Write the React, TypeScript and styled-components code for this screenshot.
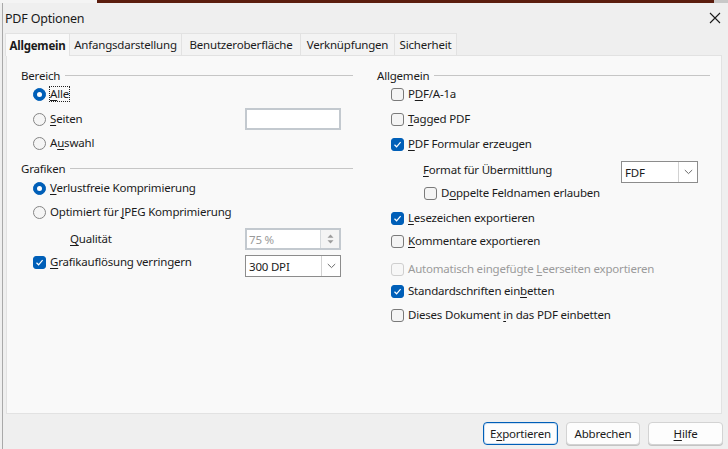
import styled, { createGlobalStyle } from "styled-components";

const Global = createGlobalStyle`
  html, body { margin: 0; padding: 0; }
  body {
    font-family: "Noto Sans", "Liberation Sans", sans-serif;
    font-size: 11.5px;
    letter-spacing: -0.2px;
    color: #1b1b1b;
    background: #efefef;
  }
`;

const Screen = styled.div`
  width: 728px;
  height: 449px;
  display: flex;
  flex-direction: column;
  overflow: hidden;
  background: #efefef;
`;

const TopStrip = styled.div`
  height: 3px;
  flex: none;
  background: linear-gradient(to right, #f4f4f4 0 97px, #5b1d0e 97px 714px, #c8c8c8 714px);
`;

const Body = styled.div`
  flex: 1;
  display: flex;
  flex-direction: column;
  margin-left: 2px;
  border-left: 1px solid #a9a9a9;
`;

const TitleBar = styled.div`
  height: 30px;
  display: flex;
  align-items: center;
  justify-content: space-between;
  padding: 0 7px 0 2px;
  font-size: 12.5px;
  color: #1a1a1a;
`;

const CloseIcon = () => (
  <svg width="12" height="12" viewBox="0 0 12 12">
    <path d="M1 1 L11 11 M11 1 L1 11" stroke="#1a1a1a" strokeWidth="1.1" fill="none" />
  </svg>
);

const TabBar = styled.div`
  height: 22px;
  display: flex;
  padding-left: 2px;
`;

const Tab = styled.div<{ $w: number; $active?: boolean }>`
  width: ${(p) => p.$w}px;
  display: flex;
  align-items: center;
  justify-content: center;
  box-sizing: border-box;
  font-weight: ${(p) => (p.$active ? 700 : 400)};
  background: ${(p) => (p.$active ? "#f9f9f9" : "#f3f3f3")};
  border: 1px solid #e2e2e2;
  border-bottom: none;
  border-left: ${(p) => (p.$active ? "1px solid #e2e2e2" : "none")};
  margin-bottom: ${(p) => (p.$active ? "-1px" : "0")};
  position: relative;
  z-index: ${(p) => (p.$active ? 1 : 0)};
`;

const Panel = styled.div`
  height: 359px;
  margin: 0 6px 0 3px;
  box-sizing: border-box;
  background: #f9f9f9;
  border: 1px solid #e2e2e2;
  display: grid;
  grid-template-columns: 332px 333px;
  column-gap: 24px;
  padding: 11px 0 0 14px;
  align-items: start;
`;

const Column = styled.div`
  display: flex;
  flex-direction: column;
`;

const SectionHead = styled.div<{ $mt?: number }>`
  height: 16px;
  margin-top: ${(p) => p.$mt ?? 0}px;
  display: flex;
  align-items: center;
  gap: 5px;
`;

const Rule = styled.div`
  flex: 1;
  height: 1px;
  background: #c6c6c6;
`;

const Row = styled.div<{ $mt?: number; $h?: number; $indent?: number; $top?: boolean }>`
  display: flex;
  align-items: ${(p) => (p.$top ? "flex-start" : "center")};
  height: ${(p) => p.$h ?? 22}px;
  margin-top: ${(p) => p.$mt ?? 0}px;
  padding-left: ${(p) => p.$indent ?? 0}px;
`;

const Option = styled.div<{ $pt?: number }>`
  display: flex;
  align-items: center;
  gap: 4px;
  flex: 1;
  padding-top: ${(p) => p.$pt ?? 0}px;
`;

const Label = styled.span<{ $disabled?: boolean; $focus?: boolean }>`
  color: ${(p) => (p.$disabled ? "#9b9b9b" : "#1b1b1b")};
  white-space: nowrap;
  outline: ${(p) => (p.$focus ? "1px dotted #222" : "none")};
  outline-offset: 0;
  line-height: 14px;
`;

const FieldLabel = styled.span<{ $indent: number; $lift?: number }>`
  flex: 1;
  padding-left: ${(p) => p.$indent}px;
  margin-bottom: ${(p) => p.$lift ?? 0}px;
  white-space: nowrap;
`;

const U = styled.span`
  text-decoration: underline;
  text-underline-offset: 2px;
  text-decoration-thickness: 1px;
`;

const RadioCircle = styled.span<{ $on?: boolean }>`
  width: 13px;
  height: 13px;
  box-sizing: border-box;
  border-radius: 50%;
  flex: none;
  display: flex;
  align-items: center;
  justify-content: center;
  background: ${(p) => (p.$on ? "#005fb8" : "#f5f5f5")};
  border: 1px solid ${(p) => (p.$on ? "#005fb8" : "#858585")};
  &::after {
    content: "";
    display: ${(p) => (p.$on ? "block" : "none")};
    width: 5px;
    height: 5px;
    border-radius: 50%;
    background: #fff;
  }
`;

const Box = styled.span<{ $on?: boolean; $disabled?: boolean }>`
  width: 13px;
  height: 13px;
  box-sizing: border-box;
  border-radius: 3px;
  flex: none;
  display: flex;
  align-items: center;
  justify-content: center;
  background: ${(p) => (p.$on ? "#005fb8" : p.$disabled ? "#f7f7f7" : "#f4f4f4")};
  border: 1px solid ${(p) => (p.$on ? "#005fb8" : p.$disabled ? "#cfcfcf" : "#7a7a7a")};
`;

const Check = ({ on, disabled }: { on?: boolean; disabled?: boolean }) => (
  <Box $on={on} $disabled={disabled}>
    {on && (
      <svg width="9" height="9" viewBox="0 0 9 9">
        <path d="M1.5 4.8 L3.6 6.8 L7.6 2.2" stroke="#fff" strokeWidth="1.2" fill="none" />
      </svg>
    )}
  </Box>
);

const TextField = styled.div<{ $w: number; $mr: number; $disabled?: boolean }>`
  width: ${(p) => p.$w}px;
  height: 22px;
  margin-right: ${(p) => p.$mr}px;
  box-sizing: border-box;
  flex: none;
  display: flex;
  align-items: center;
  background: #fff;
  border: ${(p) => (p.$disabled ? "2px solid #c3c9cf" : "1px solid #8c8c8c")};
  color: ${(p) => (p.$disabled ? "#9a9a9a" : "#1b1b1b")};
  padding-left: ${(p) => (p.$disabled ? 2 : 3)}px;
`;

const FieldText = styled.span`
  flex: 1;
  white-space: nowrap;
`;

const SideButton = styled.div<{ $disabled?: boolean }>`
  width: 18px;
  align-self: stretch;
  display: flex;
  flex-direction: column;
  align-items: center;
  justify-content: center;
  gap: 2px;
  background: ${(p) => (p.$disabled ? "#f4f4f4" : "#fff")};
  border-left: 1px solid ${(p) => (p.$disabled ? "#d6dadd" : "#d2d2d2")};
`;

const Chevron = () => (
  <svg width="9" height="6" viewBox="0 0 9 6">
    <path d="M0.8 1 L4.5 4.6 L8.2 1" stroke="#6b6b6b" strokeWidth="1" fill="none" />
  </svg>
);

const SpinArrows = () => (
  <>
    <svg width="7" height="4" viewBox="0 0 7 4">
      <path d="M0.5 3.8 L3.5 0.5 L6.5 3.8 Z" fill="#9c9c9c" />
    </svg>
    <svg width="7" height="4" viewBox="0 0 7 4">
      <path d="M0.5 0.2 L3.5 3.5 L6.5 0.2 Z" fill="#9c9c9c" />
    </svg>
  </>
);

const Footer = styled.div`
  flex: 1;
  display: flex;
  justify-content: flex-end;
  align-items: flex-start;
  gap: 8px;
  padding: 8px 5px 0 0;
`;

const Button = styled.div<{ $w: number; $default?: boolean }>`
  width: ${(p) => p.$w}px;
  height: 23px;
  box-sizing: border-box;
  display: flex;
  align-items: center;
  justify-content: center;
  background: #fdfdfd;
  border-radius: 4px;
  border: 1px solid ${(p) => (p.$default ? "#005fb8" : "#d3d3d3")};
  box-shadow: ${(p) => (p.$default ? "inset 0 0 0 1px #cfe0f1" : "0 1px 0 #c4c4c4")};
`;

export default function App() {
  return (
    <Screen>
      <Global />
      <TopStrip />
      <Body>
        <TitleBar>
          <span>PDF Optionen</span>
          <CloseIcon />
        </TitleBar>
        <TabBar>
          <Tab $w={65} $active>Allgemein</Tab>
          <Tab $w={112}>Anfangsdarstellung</Tab>
          <Tab $w={119}>Benutzeroberfläche</Tab>
          <Tab $w={94}>Verknüpfungen</Tab>
          <Tab $w={62}>Sicherheit</Tab>
        </TabBar>
        <Panel>
          <Column>
            <SectionHead>
              <span>Bereich</span>
              <Rule />
            </SectionHead>
            <Row $indent={12}>
              <Option>
                <RadioCircle $on />
                <Label $focus><U>A</U>lle</Label>
              </Option>
            </Row>
            <Row $mt={3} $indent={12}>
              <Option>
                <RadioCircle />
                <Label><U>S</U>eiten</Label>
              </Option>
              <TextField $w={96} $mr={12} $disabled />
            </Row>
            <Row $mt={2} $indent={12}>
              <Option>
                <RadioCircle />
                <Label>A<U>u</U>swahl</Label>
              </Option>
            </Row>
            <SectionHead $mt={6}>
              <span>Grafiken</span>
              <Rule />
            </SectionHead>
            <Row $mt={1} $indent={12}>
              <Option>
                <RadioCircle $on />
                <Label><U>V</U>erlustfreie Komprimierung</Label>
              </Option>
            </Row>
            <Row $mt={2} $indent={12}>
              <Option>
                <RadioCircle />
                <Label>Optimiert für <U>J</U>PEG Komprimierung</Label>
              </Option>
            </Row>
            <Row $mt={5}>
              <FieldLabel $indent={49} $lift={2}><U>Q</U>ualität</FieldLabel>
              <TextField $w={96} $mr={12} $disabled>
                <FieldText>75 %</FieldText>
                <SideButton $disabled>
                  <SpinArrows />
                </SideButton>
              </TextField>
            </Row>
            <Row $mt={5} $indent={12} $top>
              <Option $pt={0}>
                <Check on />
                <Label><U>G</U>rafikauflösung verringern</Label>
              </Option>
              <TextField $w={96} $mr={12}>
                <FieldText>300 DPI</FieldText>
                <SideButton>
                  <Chevron />
                </SideButton>
              </TextField>
            </Row>
          </Column>
          <Column>
            <SectionHead>
              <span>Allgemein</span>
              <Rule />
            </SectionHead>
            <Row $mt={0} $indent={14}>
              <Option>
                <Check />
                <Label>P<U>D</U>F/A-1a</Label>
              </Option>
            </Row>
            <Row $mt={3} $indent={14}>
              <Option>
                <Check />
                <Label><U>T</U>agged PDF</Label>
              </Option>
            </Row>
            <Row $mt={3} $indent={14}>
              <Option>
                <Check on />
                <Label><U>P</U>DF Formular erzeugen</Label>
              </Option>
            </Row>
            <Row $mt={6}>
              <FieldLabel $indent={46} $lift={6}><U>F</U>ormat für Übermittlung</FieldLabel>
              <TextField $w={77} $mr={12}>
                <FieldText>FDF</FieldText>
                <SideButton>
                  <Chevron />
                </SideButton>
              </TextField>
            </Row>
            <Row $h={20} $mt={0} $indent={47}>
              <Option>
                <Check />
                <Label>D<U>o</U>ppelte Feldnamen erlauben</Label>
              </Option>
            </Row>
            <Row $mt={4} $indent={14}>
              <Option>
                <Check on />
                <Label><U>L</U>esezeichen exportieren</Label>
              </Option>
            </Row>
            <Row $mt={1} $indent={14}>
              <Option>
                <Check />
                <Label><U>K</U>ommentare exportieren</Label>
              </Option>
            </Row>
            <Row $mt={6} $indent={14}>
              <Option>
                <Check disabled />
                <Label $disabled>Automatisch eingefügte <U>L</U>eerseiten exportieren</Label>
              </Option>
            </Row>
            <Row $mt={0} $indent={14}>
              <Option>
                <Check on />
                <Label>Standardschriften ein<U>b</U>etten</Label>
              </Option>
            </Row>
            <Row $mt={2} $indent={14}>
              <Option>
                <Check />
                <Label>Dieses Dokument <U>i</U>n das PDF einbetten</Label>
              </Option>
            </Row>
          </Column>
        </Panel>
        <Footer>
          <Button $w={75} $default>E<U>x</U>portieren</Button>
          <Button $w={74}>Abbrechen</Button>
          <Button $w={75}><U>H</U>ilfe</Button>
        </Footer>
      </Body>
    </Screen>
  );
}
